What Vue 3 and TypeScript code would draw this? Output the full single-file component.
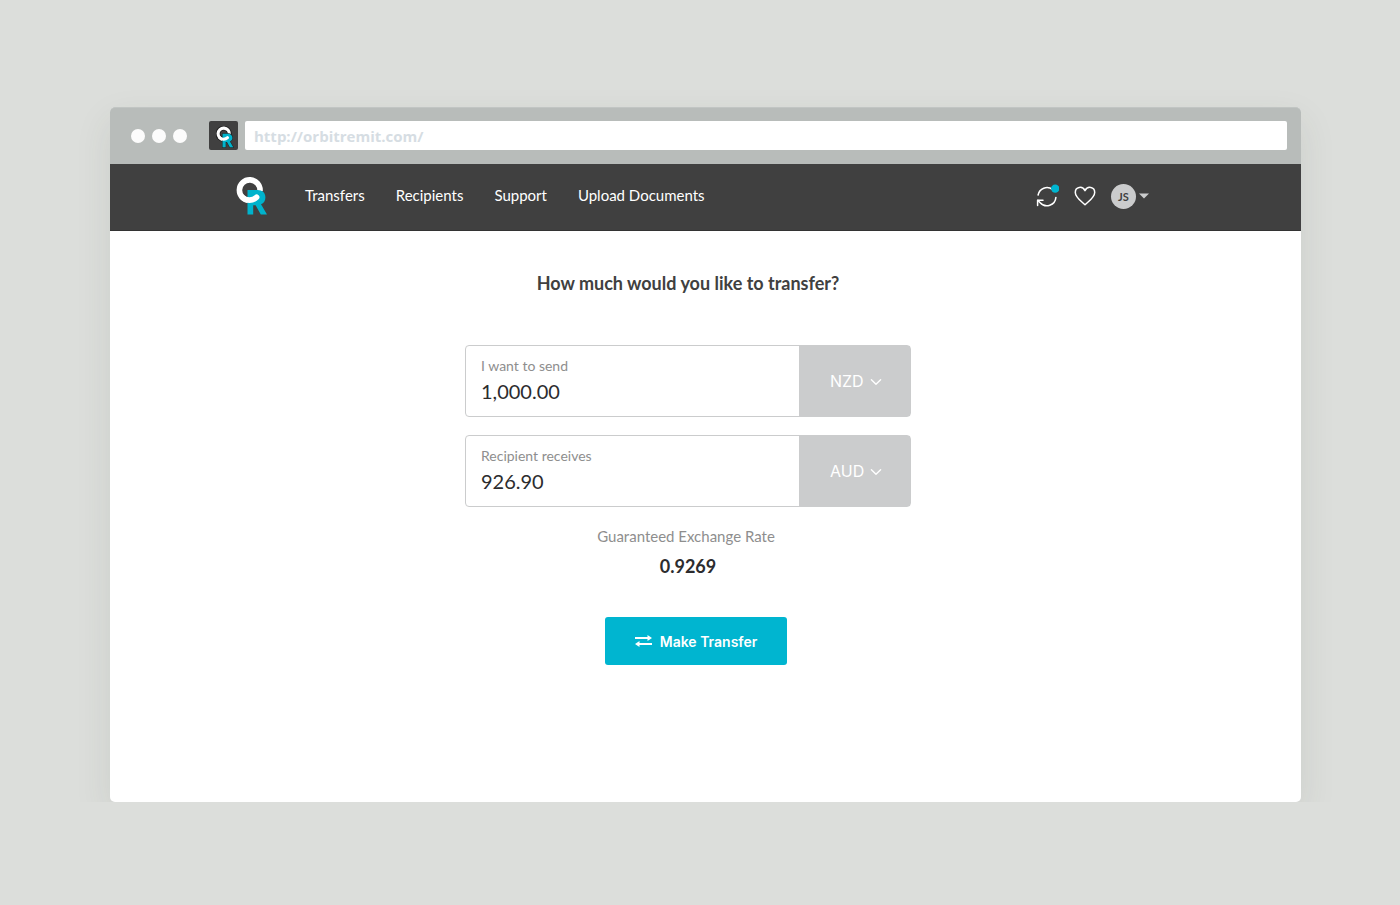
<script setup lang="ts">
import { ref } from 'vue'

interface AmountField {
  id: string
  label: string
  amount: string
  currency: string
}

const address = ref('http://orbitremit.com/')
const links: string[] = ['Transfers', 'Recipients', 'Support', 'Upload Documents']
const currencies: string[] = ['NZD', 'AUD']
const fields = ref<AmountField[]>([
  { id: 'send', label: 'I want to send', amount: '1,000.00', currency: 'NZD' },
  { id: 'receive', label: 'Recipient receives', amount: '926.90', currency: 'AUD' },
])
const rate = '0.9269'
</script>

<template>
  <div class="stage">
    <div class="window">
      <div class="chrome">
        <div class="dots"><span></span><span></span><span></span></div>
        <div class="favicon">
          <svg viewBox="0 0 32 40" width="18" height="22" aria-hidden="true">
            <use href="#mark-ring" stroke="#222" stroke-width="9" />
            <use href="#mark-ring" stroke="#fff" stroke-width="5.6" />
            <use href="#mark-leg" stroke="#222" stroke-width="2" />
            <use href="#mark-leg" />
            <use href="#mark-hook" />
          </svg>
        </div>
        <input v-model="address" class="address" type="text" aria-label="Address" />
      </div>

      <header class="navbar">
        <a class="logo" href="#" aria-label="OrbitRemit">
          <svg viewBox="0 0 32 40" width="32" height="40" aria-hidden="true">
            <defs>
              <path id="mark-ring" d="M24 15A10.3 10.3 0 1 0 13.7 24.5" fill="none" />
              <path id="mark-leg" fill="#00b3cc" fill-rule="evenodd" d="M11.5 14H21.2C26.6 14 29.4 17 29.4 21.4C29.4 24.6 27.8 27 25 28.2L31 38.6H24.8L19.6 29.2H17.2V38.6H11.5Z" />
              <path id="mark-hook" d="M6 20.9A10.3 10.3 0 0 0 20.6 21.3" fill="none" stroke="#fff" stroke-width="5.6" stroke-linecap="round" />
            </defs>
            <use href="#mark-ring" stroke="#fff" stroke-width="5.6" />
            <use href="#mark-leg" />
            <path d="M14 19.2A5.5 5.5 0 0 0 19 15.5V14H14Z" fill="#00b3cc" />
            <use href="#mark-hook" />
          </svg>
        </a>
        <nav class="links">
          <a v-for="link in links" :key="link" href="#">{{ link }}</a>
        </nav>
        <div class="tools">
          <button class="tool" type="button" aria-label="Updates">
            <svg viewBox="0 0 24 24" width="24" height="24" aria-hidden="true">
              <g fill="none" stroke="#fff" stroke-width="1.5" stroke-linecap="round" stroke-linejoin="round">
                <path d="M3.1 11A9 9 0 0 1 17.5 5.5M20.9 13.4A9 9 0 0 1 5.2 18.7L2.8 16.4" />
                <path d="M2.6 21.6V16.2H8" />
              </g>
              <circle cx="20.2" cy="4.6" r="4.2" fill="#00b5d0" />
            </svg>
          </button>
          <button class="tool" type="button" aria-label="Favourites">
            <svg viewBox="0 0 24 24" width="24" height="24" aria-hidden="true">
              <path d="M12 20.8C9.2 18 2.3 13.4 2.3 8.4C2.3 2.8 9.4 1.4 12 6.6C14.6 1.4 21.7 2.8 21.7 8.4C21.7 13.4 14.8 18 12 20.8Z" fill="none" stroke="#fff" stroke-width="1.5" stroke-linejoin="round" />
            </svg>
          </button>
          <button class="account" type="button" aria-label="Account JS">
            <span class="avatar">JS</span>
            <svg viewBox="0 0 10 6" width="10" height="6" aria-hidden="true"><path d="M0 0.5H10L5 5.5Z" fill="#cbcccd" /></svg>
          </button>
        </div>
      </header>

      <main class="content">
        <form class="form" @submit.prevent>
          <h1>How much would you like to transfer?</h1>
          <div v-for="field in fields" :key="field.id" class="field">
            <div class="amount">
              <label :for="field.id">{{ field.label }}</label>
              <input :id="field.id" v-model="field.amount" type="text" inputmode="decimal" />
            </div>
            <div class="currency">
              <select v-model="field.currency" :aria-label="field.label + ' currency'">
                <option v-for="code in currencies" :key="code" :value="code">{{ code }}</option>
              </select>
              <svg viewBox="0 0 12 8" width="12" height="8" aria-hidden="true"><path d="M1.4 1.8L6 6.2L10.6 1.8" fill="none" stroke="#fff" stroke-width="1.4" stroke-linecap="round" stroke-linejoin="round" /></svg>
            </div>
          </div>
          <p class="rate-label">Guaranteed Exchange Rate</p>
          <p class="rate">{{ rate }}</p>
          <button class="submit" type="submit">
            <svg viewBox="0 0 17 12" width="17" height="12" aria-hidden="true">
              <path d="M0 2H12.5V0L17 3L12.5 6V4H0ZM17 8H4.5V6L0 9L4.5 12V10H17Z" fill="#fff" />
            </svg>
            Make Transfer
          </button>
        </form>
      </main>
    </div>
  </div>
</template>

<style>
body {
  background: #dcdedb;
}
</style>

<style scoped>
* {
  box-sizing: border-box;
}
.stage {
  padding: 107px 99px 103px 110px;
  font-family: Lato, "Open Sans", sans-serif;
}
.window {
  display: flex;
  flex-direction: column;
  min-height: 695px;
  border-radius: 5px;
  background: #fff;
  box-shadow: 0 14px 36px rgba(60, 70, 50, 0.1);
  clip-path: inset(-60px -60px 0 -60px round 0 0 5px 5px);
}
.chrome {
  display: flex;
  align-items: center;
  height: 57px;
  padding: 0 14px 1px 21px;
  border-top: 1px solid #c1c5c3;
  border-radius: 5px 5px 0 0;
  background: #b8bcba;
}
.dots {
  display: flex;
  gap: 7px;
  width: 78px;
}
.dots span {
  width: 14px;
  height: 14px;
  border-radius: 50%;
  background: #fcfcfc;
}
.favicon {
  display: grid;
  place-items: center;
  width: 29px;
  height: 29px;
  margin-right: 7px;
  padding: 2px 0 0 2px;
  border-radius: 2px;
  background: #404040;
}
.address {
  flex: 1;
  min-width: 0;
  height: 29px;
  padding: 0 9px;
  border: 0;
  border-radius: 2px;
  background: #fff;
  color: #d6dde3;
  font: 700 15px "Open Sans", sans-serif;
}
.navbar {
  display: flex;
  align-items: center;
  height: 67px;
  padding: 0 152px 2px 126px;
  border-bottom: 1px solid #333;
  background: #404040;
}
.logo {
  display: flex;
  margin-right: 37px;
}
.links {
  display: flex;
  gap: 31px;
}
.links a {
  padding-bottom: 2px;
  color: #fff;
  font-size: 15px;
  line-height: 20px;
  text-decoration: none;
}
.tools {
  display: flex;
  align-items: center;
  gap: 14px;
  margin-left: auto;
}
button {
  padding: 0;
  border: 0;
  background: none;
  font-family: inherit;
}
.tool {
  display: flex;
}
.account {
  display: flex;
  align-items: center;
  gap: 3px;
}
.avatar {
  width: 25px;
  border-radius: 50%;
  background: #cbcccd;
  color: #404040;
  font-size: 11px;
  font-weight: 700;
  line-height: 25px;
  text-align: center;
}
.content {
  flex: 1;
  padding: 39px 35px 40px 0;
}
.form {
  display: flex;
  flex-direction: column;
  align-items: center;
  width: 446px;
  margin: 0 auto;
}
h1 {
  margin: 0 0 49px;
  color: #404040;
  font-size: 18px;
  font-weight: 700;
  line-height: 26px;
}
.field {
  display: flex;
  width: 100%;
  height: 72px;
  margin-bottom: 18px;
  border: 1px solid #cbcccd;
  border-radius: 4px;
}
.amount {
  display: flex;
  flex: 1;
  flex-direction: column;
  padding: 10px 15px 0;
}
label,
.rate-label {
  color: #8e8e8e;
  font-size: 14px;
  line-height: 20px;
}
.amount input {
  width: 100%;
  height: 30px;
  padding: 0;
  border: 0;
  background: none;
  color: #2c2c2e;
  font: 400 20px Lato, sans-serif;
}
.currency {
  position: relative;
  width: 111px;
  background: #cbcccd;
}
.currency select {
  width: 100%;
  height: 100%;
  padding: 0 0 0 31px;
  border: 0;
  background: none;
  color: #fff;
  font: 400 16px Inter, sans-serif;
  appearance: none;
}
.currency svg {
  position: absolute;
  top: 32px;
  right: 28px;
  pointer-events: none;
}
p {
  margin: 0;
}
.rate-label {
  margin: 1px 4px 0 0;
  font-size: 15px;
}
.rate {
  margin: 7px 0 38px;
  color: #2c2c2e;
  font-size: 18px;
  font-weight: 700;
  line-height: 26px;
}
.submit {
  display: flex;
  align-items: center;
  justify-content: center;
  gap: 8px;
  width: 182px;
  height: 48px;
  margin-left: 16px;
  border-radius: 3px;
  background: #00b5d0;
  color: #fff;
  font: 600 14px Inter, sans-serif;
}
</style>
